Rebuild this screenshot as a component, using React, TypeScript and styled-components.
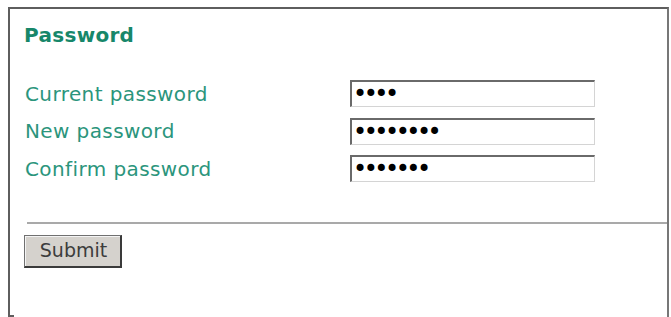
import styled, { createGlobalStyle } from "styled-components";

const Global = createGlobalStyle`
  body {
    margin: 0;
    background: #fff;
    font-family: "DejaVu Sans", Verdana, sans-serif;
  }
`;

export default function App() {
  return (
    <>
      <Global />
      <Frame>
        <Title>Password</Title>
        <Fields>
          <Label htmlFor="cur">Current password</Label>
          <PassInput id="cur" type="password" defaultValue="1234" />
          <Label htmlFor="new">New password</Label>
          <PassInput id="new" type="password" defaultValue="12345678" />
          <Label htmlFor="conf">Confirm password</Label>
          <PassInput id="conf" type="password" defaultValue="1234567" autoFocus />
        </Fields>
        <Rule />
        <SubmitButton type="button">Submit</SubmitButton>
      </Frame>
    </>
  );
}

const Frame = styled.div`
  position: relative;
  box-sizing: border-box;
  margin: 7px 0 0 8px;
  width: 661px;
  height: 310px;
  border: 2px solid #5e5e5e;
  border-bottom: none;
  border-right-color: #777;
  padding: 14px 0 0 14px;

  &::after {
    content: "";
    position: absolute;
    left: -2px;
    bottom: 0;
    width: 6px;
    height: 2px;
    background: #5e5e5e;
  }
`;

const Title = styled.h1`
  margin: 0;
  font-size: 20px;
  font-weight: bold;
  line-height: 24px;
  letter-spacing: 0.3px;
  color: #17876a;
`;

const Fields = styled.div`
  display: grid;
  grid-template-columns: 325px 245px;
  grid-auto-rows: 37.5px;
  align-items: center;
  margin-top: 28px;
  padding-left: 1px;
`;

const Label = styled.label`
  font-size: 20px;
  letter-spacing: 0.4px;
  color: #2b957c;
`;

const PassInput = styled.input`
  box-sizing: border-box;
  width: 245px;
  height: 27px;
  margin: 0;
  padding: 0 0 0 1px;
  border-style: solid;
  border-width: 2px 1px 1px 2px;
  border-color: #6a6a6a #d4d4d4 #d4d4d4 #6a6a6a;
  background: #fff;
  font-family: "DejaVu Sans", sans-serif;
  font-size: 24px;
  line-height: 23px;
  letter-spacing: -3.5px;
  color: #000;
  caret-color: #000;
  outline: none;
`;

const Rule = styled.hr`
  margin: 34px 0 0 3px;
  height: 2px;
  border: none;
  background: #a9a9a9;
`;

const SubmitButton = styled.button`
  box-sizing: border-box;
  display: block;
  margin: 11px 0 0 0;
  width: 98px;
  height: 33px;
  padding: 0 0 2px 2px;
  background: #d5d2cd;
  border-style: solid;
  border-width: 1px 2px 2px 1px;
  border-color: #707070 #3a3a3a #3a3a3a #707070;
  box-shadow: inset 1px 1px 0 #f4f4f4;
  font-family: "DejaVu Sans", sans-serif;
  font-size: 19px;
  color: #3c3c3c;
  cursor: pointer;
`;
